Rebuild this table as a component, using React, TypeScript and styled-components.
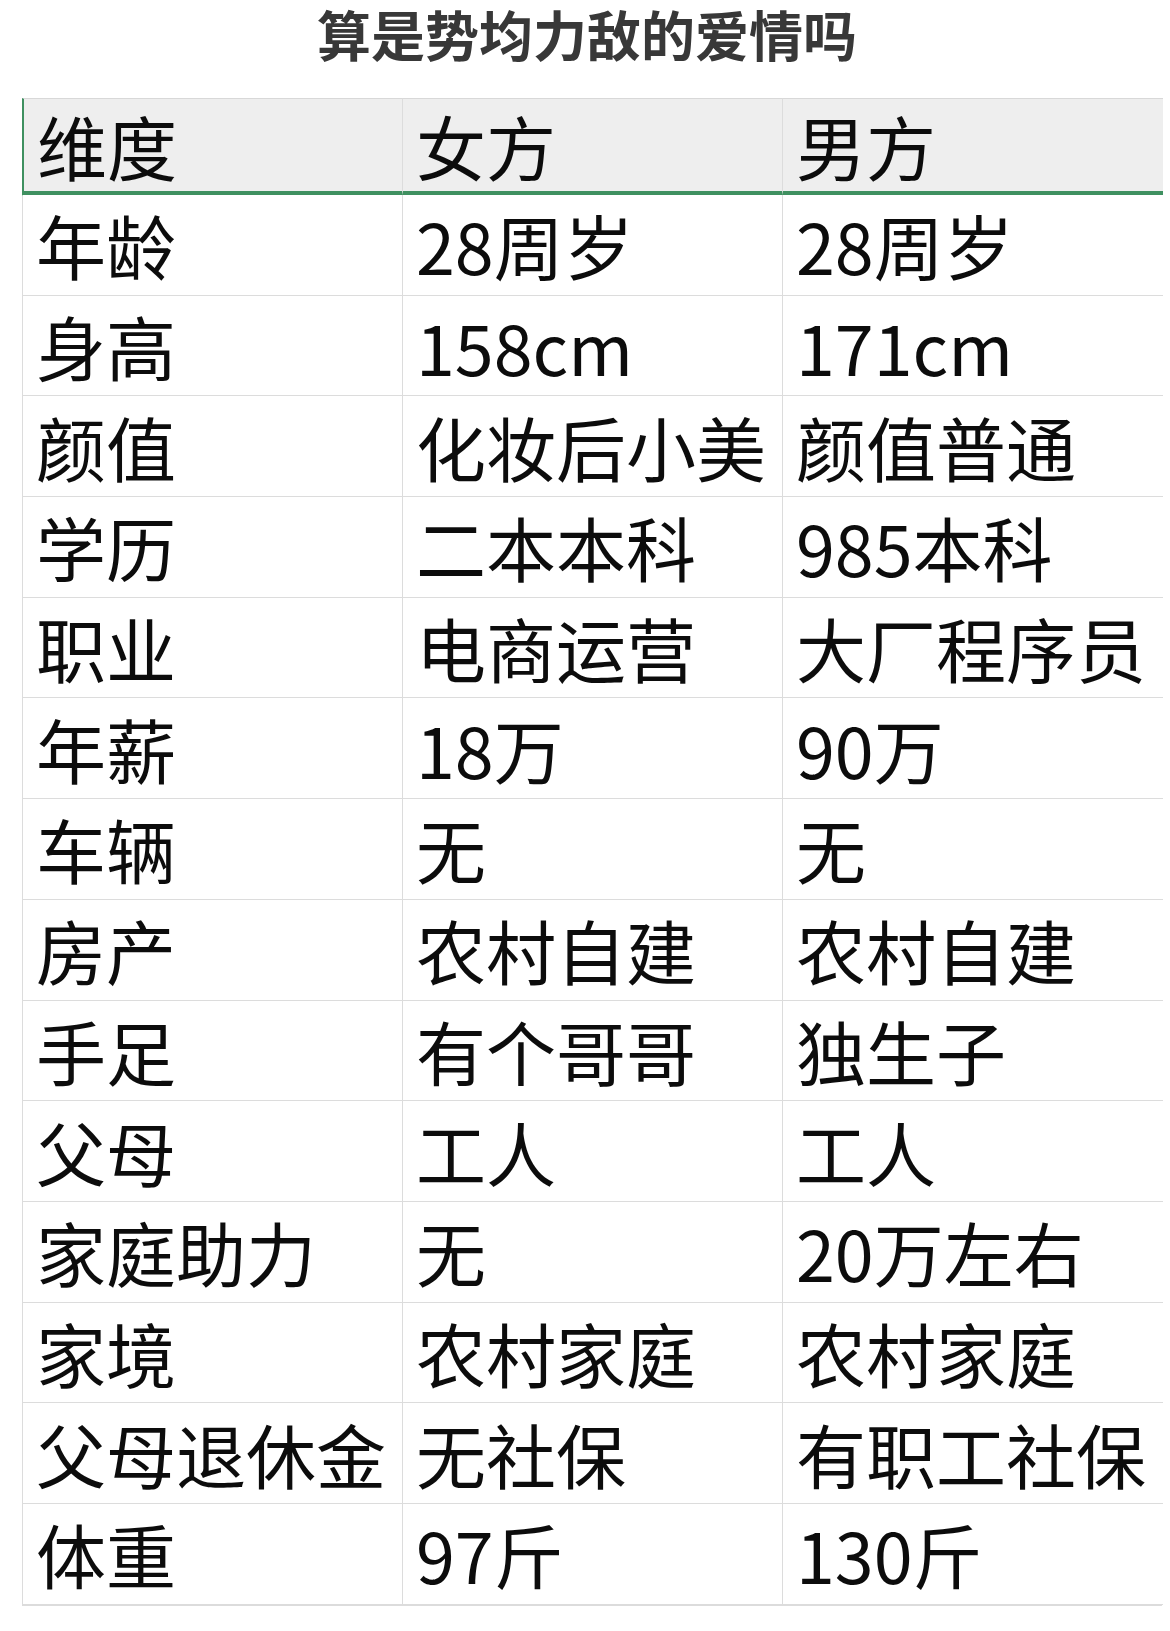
import React from "react";
import styled, { createGlobalStyle } from "styled-components";

const GlobalStyle = createGlobalStyle`
  html, body {
    margin: 0;
    padding: 0;
    background: #ffffff;
  }
  body {
    font-family: "Noto Sans CJK SC", "Noto Sans", "Liberation Sans", sans-serif;
  }
`;

const Page = styled.div`
  width: 1170px;
  min-height: 1631px;
  background: #ffffff;
  display: flex;
  flex-direction: column;
  align-items: stretch;
`;

const Title = styled.h1`
  margin: 0 0 30px 0;
  padding: 0 0 0 4px;
  height: 68px;
  font-family: "Noto Sans CJK SC", sans-serif;
  font-weight: 700;
  font-size: 54px;
  line-height: 68px;
  color: #383838;
  text-align: center;
  white-space: nowrap;
`;

const Table = styled.div`
  margin-left: 22px;
  width: 1140px;
  display: grid;
  grid-template-columns: 380px 380px 380px;
  border-left: 1px solid #dcdcdc;
  border-bottom: 1px solid #dcdcdc;
  border-right: 1px solid #e2e2e2;
  box-sizing: border-box;
`;

const Cell = styled.div<{ $head?: boolean; $first?: boolean }>`
  box-sizing: border-box;
  height: ${(p) => (p.$head ? "97px" : "100.7px")};
  display: flex;
  align-items: center;
  padding-left: 13px;
  white-space: nowrap;
  overflow: visible;
  font-family: "Noto Sans CJK SC", sans-serif;
  font-size: 70px;
  font-weight: 400;
  color: #0c0c0c;
  background: ${(p) => (p.$head ? "#eeeeee" : "#ffffff")};
  border-top: ${(p) => (p.$head ? "1px solid #d8d8d8" : "none")};
  border-bottom: ${(p) => (p.$head ? "4px solid #3f9060" : "1px solid #dcdcdc")};
  border-right: 1px solid #dcdcdc;
  box-shadow: ${(p) => (p.$head ? "0 1px 0 #a9dcb8" : "none")};
  ${(p) => (p.$head && p.$first ? "border-left: 2px solid #3f9060; margin-left: -1px;" : "")}
  &:nth-child(3n) {
    border-right: none;
  }
`;

const header = ["维度", "女方", "男方"];

const rows: [string, string, string][] = [
  ["年龄", "28周岁", "28周岁"],
  ["身高", "158cm", "171cm"],
  ["颜值", "化妆后小美", "颜值普通"],
  ["学历", "二本本科", "985本科"],
  ["职业", "电商运营", "大厂程序员"],
  ["年薪", "18万", "90万"],
  ["车辆", "无", "无"],
  ["房产", "农村自建", "农村自建"],
  ["手足", "有个哥哥", "独生子"],
  ["父母", "工人", "工人"],
  ["家庭助力", "无", "20万左右"],
  ["家境", "农村家庭", "农村家庭"],
  ["父母退休金", "无社保", "有职工社保"],
  ["体重", "97斤", "130斤"],
];

export default function App() {
  return (
    <Page>
      <GlobalStyle />
      <Title>算是势均力敌的爱情吗</Title>
      <Table>
        {header.map((h, i) => (
          <Cell key={h} $head $first={i === 0}>
            {h}
          </Cell>
        ))}
        {rows.map((r) =>
          r.map((c, j) => <Cell key={r[0] + j}>{c}</Cell>)
        )}
      </Table>
    </Page>
  );
}
